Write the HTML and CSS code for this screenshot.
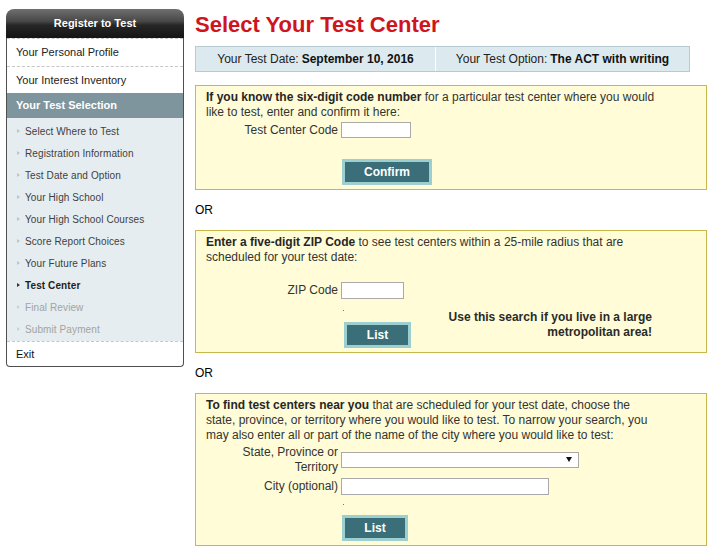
FILE: index.html
```html
<!DOCTYPE html>
<html lang="en">
<head>
<meta charset="utf-8">
<title>Select Your Test Center</title>
<link rel="stylesheet" href="styles.css">
</head>
<body>
<div class="page">
  <nav class="sidebar">
    <div class="side-head">Register to Test</div>
    <div class="side-body">
      <a class="side-item first">Your Personal Profile</a>
      <a class="side-item">Your Interest Inventory</a>
      <div class="side-current">Your Test Selection</div>
      <ul class="steps">
        <li>Select Where to Test</li>
        <li>Registration Information</li>
        <li>Test Date and Option</li>
        <li>Your High School</li>
        <li>Your High School Courses</li>
        <li>Score Report Choices</li>
        <li>Your Future Plans</li>
        <li class="active">Test Center</li>
        <li class="disabled">Final Review</li>
        <li class="disabled">Submit Payment</li>
      </ul>
      <a class="side-item exit">Exit</a>
    </div>
  </nav>

  <main class="main">
    <h1 class="title">Select Your Test Center</h1>

    <div class="info">
      <div class="info-cell date">Your Test Date: <b>September 10, 2016</b></div>
      <div class="info-cell option">Your Test Option: <b>The ACT with writing</b></div>
    </div>

    <section class="box box-code">
      <p class="intro"><b>If you know the six-digit code number</b> for a particular test center where you would like to test, enter and confirm it here:</p>
      <div class="frow">
        <label class="flabel" for="code">Test Center Code</label>
        <input id="code" class="field field-code" type="text">
      </div>
      <button class="btn btn-confirm" type="button">Confirm</button>
    </section>

    <div class="or">OR</div>

    <section class="box box-zip">
      <p class="intro"><b>Enter a five-digit ZIP Code</b> to see test centers within a 25-mile radius that are scheduled for your test date:</p>
      <div class="frow zip-row">
        <label class="flabel" for="zip">ZIP Code</label>
        <input id="zip" class="field field-zip" type="text">
      </div>
      <div class="listrow">
        <div class="actions">
          <div class="dotline dotline-zip"><span class="dot"></span></div>
          <button class="btn btn-list btn-list-zip" type="button">List</button>
        </div>
        <p class="note">Use this search if you live in a large metropolitan area!</p>
      </div>
    </section>

    <div class="or">OR</div>

    <section class="box box-state">
      <p class="intro"><b>To find test centers near you</b> that are scheduled for your test date, choose the state, province, or territory where you would like to test. To narrow your search, you may also enter all or part of the name of the city where you would like to test:</p>
      <div class="frow state-row">
        <label class="flabel" for="state">State, Province or Territory</label>
        <span class="selectwrap"><select id="state" class="field field-state"><option></option></select></span>
      </div>
      <div class="frow city-row">
        <label class="flabel" for="city">City (optional)</label>
        <input id="city" class="field field-city" type="text">
      </div>
      <div class="actions">
        <div class="dotline dotline-state"><span class="dot"></span></div>
        <button class="btn btn-list" type="button">List</button>
      </div>
    </section>
  </main>
</div>
</body>
</html>
```

FILE: styles.css
```css
* {
  box-sizing: border-box;
}

body {
  margin: 0;
  background: #ffffff;
  color: #333333;
  font-family: "Liberation Sans", Arial, sans-serif;
  font-size: 12px;
}

.page {
  display: flex;
  align-items: flex-start;
  padding-left: 6px;
}

/* ---------- Sidebar ---------- */

.sidebar {
  width: 178px;
  margin-top: 9px;
  flex: none;
}

.side-head {
  height: 29px;
  line-height: 29px;
  border-radius: 8px 8px 0 0;
  background: linear-gradient(#6f6f6f 0%, #484848 42%, #262626 56%, #151515 100%);
  color: #ffffff;
  font-size: 11px;
  font-weight: bold;
  text-align: center;
}

.side-body {
  border: 1px solid #4f4f4f;
  border-top: none;
  border-radius: 0 0 4px 4px;
  background: #ffffff;
  overflow: hidden;
}

.side-item {
  display: block;
  padding-left: 9px;
  border-top: 1px dashed #c6c6c6;
  color: #222222;
  font-size: 11px;
  line-height: 26px;
}

.side-item.first {
  line-height: 27px;
}

.side-item.exit {
  line-height: 24px;
  color: #111111;
}

.side-current {
  height: 25px;
  line-height: 25px;
  padding-left: 9px;
  background: #7f959e;
  color: #ffffff;
  font-size: 11px;
  font-weight: bold;
}

.steps {
  margin: 0;
  padding: 2px 0 1px;
  list-style: none;
  background: #e5edf0;
}

.steps li {
  display: flex;
  align-items: center;
  height: 22px;
  padding-left: 10px;
  color: #3f3f3f;
  font-size: 10px;
  letter-spacing: 0.1px;
}

.steps li::before {
  content: "";
  width: 0;
  height: 0;
  margin-right: 5px;
  border-left: 3px solid #c2c2c2;
  border-top: 2.5px solid transparent;
  border-bottom: 2.5px solid transparent;
}

.steps li.active {
  color: #1e1e1e;
  font-weight: bold;
}

.steps li.active::before {
  border-left-color: #333333;
}

.steps li.disabled {
  color: #a3a3a3;
}

.steps li.disabled::before {
  border-left-color: #d0d0d0;
}

/* ---------- Main ---------- */

.main {
  width: 512px;
  margin-left: 11px;
}

.title {
  margin: 12px 0 0;
  color: #d0141e;
  font-size: 22px;
  font-weight: bold;
  line-height: 26px;
}

.info {
  display: flex;
  width: 495px;
  height: 26px;
  margin-top: 8px;
  border: 1px solid #b9c9d1;
  background: #dce9ef;
  color: #222222;
}

.info-cell {
  display: flex;
  align-items: center;
  justify-content: center;
}

.info-cell b {
  margin-left: 3px;
  color: #111111;
}

.info-cell.date {
  width: 240px;
  border-right: 1px solid #ffffff;
}

.info-cell.option {
  flex: 1;
}

.box {
  padding: 4px 10px 4px;
  border: 1px solid #c8b84c;
  background: #fffcd7;
}

.box-code {
  margin-top: 13px;
}

.intro {
  max-width: 456px;
  margin: 0;
  line-height: 15px;
}

.intro b {
  color: #262626;
}

.frow {
  display: flex;
  align-items: center;
  min-height: 20px;
}

.flabel {
  width: 132px;
  margin-right: 3px;
  flex: none;
  text-align: right;
  line-height: 15px;
}

.field {
  display: block;
  margin: 0;
  padding: 0 2px;
  border: 1px solid #a9a9a9;
  border-radius: 0;
  background: #ffffff;
  font: 12px "Liberation Sans", Arial, sans-serif;
}

.field-code {
  width: 70px;
  height: 16px;
}

.field-zip {
  width: 63px;
  height: 17px;
}

.field-city {
  width: 208px;
  height: 17px;
}

.field-state {
  width: 238px;
  height: 16px;
  appearance: none;
  -webkit-appearance: none;
}

.selectwrap {
  position: relative;
  display: block;
}

.selectwrap::after {
  content: "";
  position: absolute;
  right: 7px;
  top: 5px;
  border-left: 3px solid transparent;
  border-right: 3px solid transparent;
  border-top: 5px solid #111111;
}

.zip-row {
  margin-top: 15px;
}

.state-row {
  margin-top: 2px;
}

.city-row {
  margin-top: 1px;
}

.btn {
  display: block;
  height: 26px;
  margin: 0;
  padding: 0;
  border: 3px solid #9dcfd0;
  background: #3a6f79;
  color: #ffffff;
  font: bold 12px "Liberation Sans", Arial, sans-serif;
  cursor: pointer;
}

.btn-confirm {
  width: 90px;
  margin: 19px 0 0 136px;
}

.btn-list {
  width: 66px;
}

.btn-list-zip {
  margin-left: 2px;
  width: 67px;
}

.or {
  margin: 13px 0 12px;
  color: #000000;
  line-height: 15px;
}

.listrow {
  display: flex;
  align-items: flex-start;
  width: 456px;
}

.actions {
  margin-left: 136px;
}

.dotline {
  padding-top: 10px;
  padding-left: 1px;
}

.dotline-zip {
  height: 22px;
}

.dotline-state {
  height: 19px;
  padding-top: 8px;
}

.dot {
  display: block;
  width: 1px;
  height: 1px;
  background: #777777;
}

.note {
  width: 210px;
  margin: 10px 10px 0 auto;
  color: #2a2a2a;
  font-weight: bold;
  line-height: 15px;
  text-align: right;
}
```
